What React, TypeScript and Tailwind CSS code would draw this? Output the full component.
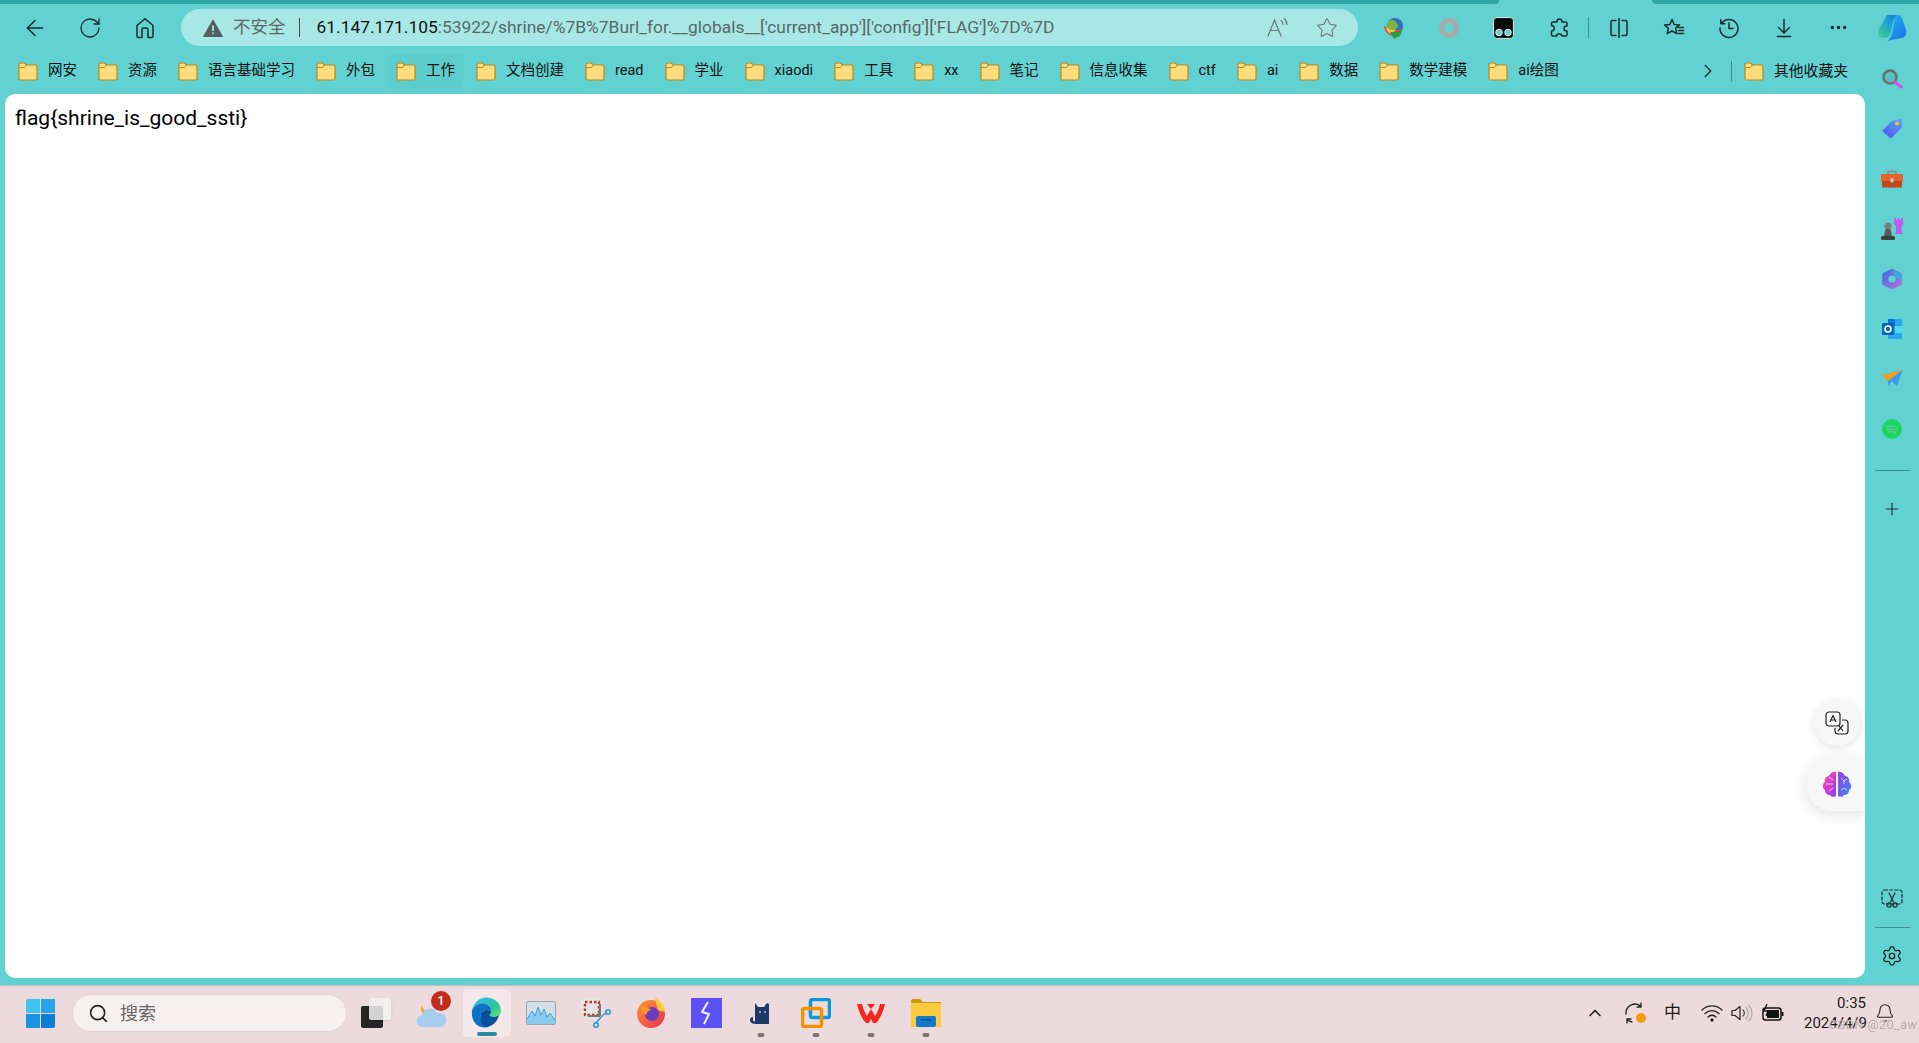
import { ArrowLeft, RotateCw, Star, ChevronRight, ChevronUp, Plus, Settings, Bell, Search, MoreHorizontal } from "lucide-react"
import type { ReactNode } from "react"

const ui = "font-['Roboto','Noto_Sans_CJK_SC',sans-serif]"

const bookmarks = ["网安", "资源", "语言基础学习", "外包", "工作", "文档创建", "read", "学业", "xiaodi", "工具", "xx", "笔记", "信息收集", "ctf", "ai", "数据", "数学建模", "ai绘图"]

const Folder = () => (
    <svg width="20" height="19" viewBox="0 0 20 19" className="shrink-0">
        <path d="M1 4V2.500A1.500 1.500 0 0 1 2.500 1h3.200c.6 0 1 .2 1.400.6L8.400 3H17.500A1.500 1.500 0 0 1 19 4.500v12A1.500 1.500 0 0 1 17.500 18h-15A1.500 1.500 0 0 1 1 16.500z" fill="#fedd80" stroke="#b98b17" strokeWidth="1.200" />
        <path d="M1 5.500h5.500L8.400 3" fill="none" stroke="#b98b17" strokeWidth="1" />
    </svg>
)

const ToolBtn = ({ children, w = "w-[55px]" }: { children: ReactNode; w?: string }) => (
    <div className={`${w} h-[36px] flex items-center justify-center shrink-0`}>{children}</div>
)

const SideBtn = ({ children }: { children: ReactNode }) => (
    <div className="h-[50px] flex items-center justify-center">{children}</div>
)

const Tile = ({ w, children, dot }: { w: string; children: ReactNode; dot?: boolean }) => (
    <div className={`${w} relative h-[48px] flex items-center justify-center shrink-0`}>
        {children}
        {dot && <div className="absolute bottom-0 left-1/2 -translate-x-1/2 w-[7px] h-[4px] rounded-full bg-[#7b7578]" />}
    </div>
)

const stroke = { fill: "none", stroke: "#1c2b2c", strokeWidth: 1.500, strokeLinecap: "round" as const, strokeLinejoin: "round" as const }

export default function App() {
    return (
        <div className={`${ui} w-[1919px] h-[1043px] overflow-hidden flex flex-col bg-[#62d1d2] text-[#111]`}>
            {/* tab strip */}
            <div className="h-[4px] flex shrink-0">
                <div className="w-[1499px] bg-[#2fa5a8] rounded-br-[6px]" />
                <div className="w-[153px]" />
                <div className="flex-1 bg-[#2fa5a8] rounded-bl-[6px]" />
            </div>

            {/* toolbar */}
            <div className="h-[46px] flex items-center pl-[7px] shrink-0 pt-[1px]">
                <ToolBtn><ArrowLeft size={26} strokeWidth={1.400} color="#1c2b2c" /></ToolBtn>
                <ToolBtn><RotateCw size={24} strokeWidth={1.300} color="#1c2b2c" /></ToolBtn>
                <ToolBtn>
                    <svg width="22" height="24" viewBox="0 0 22 24" {...stroke}>
                        <path d="M3 9.500 11 2.800l8 6.700V20a1.500 1.500 0 0 1-1.500 1.500H14v-8a1.500 1.500 0 0 0-1.500-1.500h-3A1.500 1.500 0 0 0 8 13.500v8H4.500A1.500 1.500 0 0 1 3 20z" />
                    </svg>
                </ToolBtn>
                <div className="ml-[9px] w-[1177px] h-[37px] rounded-full bg-[#a7e8e6] flex items-center shrink-0 text-[17.400px] whitespace-nowrap">
                    <svg width="20" height="18" viewBox="0 0 20 18" className="ml-[22px] shrink-0">
                        <path d="M10 1 19.500 17.500H.5z" fill="#555f61" stroke="#555f61" strokeLinejoin="round" />
                        <path d="M10 6.500v5.500M10 13.600v1.500" stroke="#a7e8e6" strokeWidth="1.800" />
                    </svg>
                    <span className="ml-[10px] text-[#5a6768] text-[17.500px]">不安全</span>
                    <div className="ml-[13px] w-[1px] h-[19px] bg-[#3d4a4b]" />
                    <span className="ml-[17px] text-[#111]">61.147.171.105</span>
                    <span className="text-[#5a6768]">:53922/shrine/%7B%7Burl_for.__globals__['current_app']['config']['FLAG']%7D%7D</span>
                    <div className="flex-1" />
                    <svg width="24" height="22" viewBox="0 0 24 22" fill="none" stroke="#6b7778" strokeWidth="1.200" strokeLinecap="round" className="shrink-0">
                        <path d="M2 19 8.500 3 15 19M4.500 13.500h8" />
                        <path d="M15 3.500c1.500 1 2 2.300 2 3.800M18 1.500c2 1.500 3 3.500 3 6" />
                    </svg>
                    <Star size={22} strokeWidth={1.200} color="#6b7778" className="ml-[26px] mr-[20px] shrink-0" />
                </div>

                <div className="ml-[8px] flex items-center">
                    <ToolBtn>
                        <svg width="22" height="22" viewBox="0 0 22 22">
                            <circle cx="12" cy="9" r="8" fill="#2f6fc0" />
                            <path d="M5 5c3-3 6-2 8 0s3 5 0 7-7 2-9-1z" fill="#7cb342" />
                            <path d="M1 9c1 6 4 9 9 10l10-7-5 1c-4 1-8-1-14-4z" fill="#d9453c" />
                            <path d="M3 10c3 2 6 3 10 3l-5 4c-3-1-5-4-5-7z" fill="#e9c53d" />
                            <path d="M7 15h8l5-4-3 8-6 3z" fill="#2e9e43" />
                        </svg>
                    </ToolBtn>
                    <ToolBtn>
                        <svg width="22" height="22" viewBox="0 0 22 22"><circle cx="11" cy="11" r="7.500" fill="none" stroke="#a8a8a8" strokeWidth="5" /></svg>
                    </ToolBtn>
                    <ToolBtn>
                        <svg width="21" height="22" viewBox="0 0 21 22">
                            <rect x=".6" y=".6" width="19.800" height="20.800" rx="3" fill="#0b0b0b" stroke="#e6e6e6" strokeWidth="1" />
                            <circle cx="6" cy="15.500" r="3.300" fill="#62d1d2" stroke="#eee" />
                            <circle cx="15" cy="15.500" r="3.300" fill="#62d1d2" stroke="#eee" />
                        </svg>
                    </ToolBtn>
                    <ToolBtn>
                        <svg width="22" height="22" viewBox="0 0 22 22" {...stroke}>
                            <path d="M9 4.500a2.500 2.500 0 0 1 5 0V5h3.500A1.500 1.500 0 0 1 19 6.500V9h-.5a2.500 2.500 0 0 0 0 5h.5v3.500a1.500 1.500 0 0 1-1.500 1.500H14a2.800 2.800 0 0 0-5.500 0H5a1.500 1.500 0 0 1-1.500-1.500V14H4a2.800 2.800 0 0 0 0-5.500h-.5V6.500A1.500 1.500 0 0 1 5 5h4z" />
                        </svg>
                    </ToolBtn>
                    <div className="w-[1px] h-[21px] mx-[2px] bg-[#3f8f90] shrink-0" />
                    <ToolBtn>
                        <svg width="22" height="22" viewBox="0 0 22 22" {...stroke}>
                            <path d="M8 3.500H4.500A1.500 1.500 0 0 0 3 5v12a1.500 1.500 0 0 0 1.500 1.500H8M14 3.500h3.500A1.500 1.500 0 0 1 19 5v12a1.500 1.500 0 0 1-1.500 1.500H14M11 1.500v19" />
                        </svg>
                    </ToolBtn>
                    <ToolBtn>
                        <svg width="22" height="22" viewBox="0 0 22 22" {...stroke}>
                            <path d="M9 2.500 11.200 7.500l5.300.4-3.900 3.500 1.200 5.200L9 14l-4.800 2.600 1.200-5.200L1.500 7.900l5.300-.4z" />
                            <path d="M15.500 10.500h5M15.500 13.500h5M15.500 16.500h5" />
                        </svg>
                    </ToolBtn>
                    <ToolBtn>
                        <svg width="22" height="22" viewBox="0 0 22 22" {...stroke}>
                            <path d="M3.500 6.500A9 9 0 1 1 2 11M2.800 2.800v4h4M11 6v5.500h4" />
                        </svg>
                    </ToolBtn>
                    <ToolBtn>
                        <svg width="22" height="22" viewBox="0 0 22 22" {...stroke}>
                            <path d="M11 2.500v13M5.500 10.500l5.500 5.500 5.500-5.500M4.500 19.500h13" />
                        </svg>
                    </ToolBtn>
                    <ToolBtn><MoreHorizontal size={21} strokeWidth={2} color="#1c2b2c" /></ToolBtn>
                    <ToolBtn w="w-[51px]">
                        <svg width="30" height="28" viewBox="0 0 30 28">
                            <defs>
                                <linearGradient id="cp1" x1="0" y1="1" x2="1" y2="0"><stop offset="0" stopColor="#43d08a" /><stop offset=".6" stopColor="#1f9fd8" /><stop offset="1" stopColor="#1579d6" /></linearGradient>
                                <linearGradient id="cp2" x1="0" y1="0" x2="1" y2="1"><stop offset="0" stopColor="#25b7f2" /><stop offset="1" stopColor="#1b6fe0" /></linearGradient>
                            </defs>
                            <path d="M10 1h11c-4 2-5 6-6 11-1 6-2 11-6 12H7C2 24 0 20 2 15z" fill="url(#cp1)" />
                            <path d="M21 1c3 0 4 3 5 6l3 9c1 4-1 8-5 8l-14 3c4-2 5-7 6-13 1-6 1-12 5-13z" fill="url(#cp2)" />
                        </svg>
                    </ToolBtn>
                </div>
            </div>

            <div className="flex-1 flex min-h-0">
                <div className="w-[1865px] flex flex-col shrink-0">
                    {/* favorites */}
                    <div className="h-[44px] flex items-center pl-[10px] pb-[2px] shrink-0 whitespace-nowrap">
                        {bookmarks.map(name => (
                            <div key={name} className={`h-[34px] px-[8px] mr-[5px] flex items-center gap-[10px] rounded-[4px] text-[14.500px] ${name === "工作" ? "bg-[#5dcccd]" : ""}`}>
                                <Folder />
                                <span>{name}</span>
                            </div>
                        ))}
                        <div className="flex-1" />
                        <ChevronRight size={22} strokeWidth={1.500} color="#1c2b2c" />
                        <div className="w-[1px] h-[21px] ml-[12px] mr-[12px] bg-[#3f8f90]" />
                        <div className="h-[34px] pr-[17px] flex items-center gap-[10px] text-[14.800px]">
                            <Folder />
                            <span>其他收藏夹</span>
                        </div>
                    </div>

                    {/* page */}
                    <div className="relative flex-1 ml-[5px] bg-white rounded-[10px] pl-[10px] pt-[9px] text-[21px] leading-[30px] text-black overflow-hidden">
                        flag{"{"}shrine_is_good_ssti{"}"}
                        <div className="absolute left-[1809px] top-[606px] w-[46px] h-[46px] rounded-full bg-[#f7f7f7] shadow-[0_2px_10px_rgba(0,0,0,0.12)] flex items-center justify-center">
                            <svg width="24" height="24" viewBox="0 0 24 24" fill="none" stroke="#222" strokeWidth="1.200" strokeLinejoin="round">
                                <rect x="1" y="1" width="14" height="14" rx="3" />
                                <path d="M5 11 8 4.500 11 11M6 9h4" />
                                <path d="M17 9h3a3 3 0 0 1 3 3v8a3 3 0 0 1-3 3h-7a3 3 0 0 1-3-3v-3" />
                                <path d="M13 20l5-6M14 15l4 5" />
                            </svg>
                        </div>
                        <div className="absolute right-0 top-[664px] w-[60px] h-[55px] rounded-l-[28px] bg-[#f7f7f7] shadow-[0_4px_14px_rgba(0,0,0,0.12)] flex items-center pl-[17px] -mt-[2px]">
                            <svg width="30" height="28" viewBox="0 0 30 28">
                                <defs>
                                    <linearGradient id="br1" x1="0" y1="0" x2="1" y2="1"><stop offset="0" stopColor="#f59a3c" /><stop offset=".35" stopColor="#e63fc2" /><stop offset="1" stopColor="#8a3ff0" /></linearGradient>
                                    <linearGradient id="br2" x1="0" y1="0" x2="1" y2="1"><stop offset="0" stopColor="#a03fe8" /><stop offset="1" stopColor="#2f8cf5" /></linearGradient>
                                </defs>
                                <path d="M14 2v24c-2 1.500-5 1-6-1-3 0-5-2-5-5-3-2-3-6 0-8-1-3 1-6 4-6 1-3 5-5 7-4z" fill="url(#br1)" />
                                <path d="M16 2v24c2 1.500 5 1 6-1 3 0 5-2 5-5 3-2 3-6 0-8 1-3-1-6-4-6-1-3-5-5-7-4z" fill="url(#br2)" />
                                <path d="M4 14h7M7 7l4 3M7 21l4-3M19 8l3 3 3-2M22 11v3M19 20l3-2 3 2" fill="none" stroke="#fff" strokeOpacity=".7" strokeWidth="1" />
                            </svg>
                        </div>
                    </div>
                </div>

                {/* sidebar */}
                <div className="flex-1 flex flex-col pt-[4px] pb-[7px]">
                    <SideBtn>
                        <svg width="22" height="22" viewBox="0 0 22 22">
                            <circle cx="9" cy="9" r="6.500" fill="#58bfc4" stroke="#6d6d6d" strokeWidth="2.400" />
                            <path d="M14 14l6 5" stroke="#d24fe0" strokeWidth="3" strokeLinecap="round" />
                        </svg>
                    </SideBtn>
                    <SideBtn>
                        <svg width="22" height="22" viewBox="0 0 22 22">
                            <defs><linearGradient id="tg" x1="0" y1="1" x2="1" y2="0"><stop offset="0" stopColor="#4f4ff0" /><stop offset="1" stopColor="#5aa5f5" /></linearGradient></defs>
                            <path d="M1.500 13 11 3.500 20.500 1v8.500L10 20z" fill="url(#tg)" stroke="url(#tg)" strokeLinejoin="round" />
                            <circle cx="16" cy="5.500" r="2" fill="#f4c430" />
                        </svg>
                    </SideBtn>
                    <SideBtn>
                        <svg width="24" height="20" viewBox="0 0 24 20">
                            <path d="M8 5V2.500h8V5" fill="none" stroke="#8a8a8a" strokeWidth="1.600" />
                            <rect x="1" y="5" width="22" height="8" rx="1" fill="#e8642c" />
                            <rect x="2" y="12" width="20" height="6.500" rx="1" fill="#bd4716" />
                            <rect x="10.500" y="9.500" width="3" height="4" fill="#c9c9c9" />
                        </svg>
                    </SideBtn>
                    <SideBtn>
                        <svg width="24" height="24" viewBox="0 0 24 24">
                            <path d="M14 1h2v2h1.500V1h2v2H21V1h2v6l-1.500 2v6l1.500 2h-8l1-2V9l-2-2z" fill="#c45af0" />
                            <circle cx="8" cy="9" r="3.500" fill="#7b7b7b" />
                            <path d="M5.500 12h5l1.500 7H4z" fill="#5a5a5a" />
                            <rect x="1" y="19" width="14" height="4" rx="1.500" fill="#3f3f3f" />
                        </svg>
                    </SideBtn>
                    <SideBtn>
                        <svg width="22" height="22" viewBox="0 0 22 22">
                            <defs><linearGradient id="ms" x1="0" y1="0" x2="1" y2="1"><stop offset="0" stopColor="#3c6fe0" /><stop offset="1" stopColor="#b46fdc" /></linearGradient></defs>
                            <path d="M11 1.500 20 6v10l-9 4.500L2 16V6z" fill="url(#ms)" stroke="url(#ms)" strokeWidth="1.500" strokeLinejoin="round" />
                            <path d="M11 1.500 20 6v6l-5-2.500z" fill="#2fb2d8" />
                            <circle cx="11" cy="11" r="3.600" fill="#62d1d2" />
                        </svg>
                    </SideBtn>
                    <SideBtn>
                        <svg width="22" height="22" viewBox="0 0 22 22">
                            <rect x="7" y="1" width="14" height="20" rx="1" fill="#28a8ea" />
                            <rect x="7" y="1" width="7" height="7" fill="#0078d4" />
                            <rect x="14" y="8" width="7" height="7" fill="#50d9ff" />
                            <rect x="1" y="5" width="12" height="12" rx="1.500" fill="#0a64b8" />
                            <circle cx="7" cy="11" r="3" fill="none" stroke="#fff" strokeWidth="1.700" />
                        </svg>
                    </SideBtn>
                    <SideBtn>
                        <svg width="22" height="18" viewBox="0 0 22 18">
                            <path d="M.5 5 21.500 0 16 16 10.500 11 8 16 6 9z" fill="#3b9af0" />
                            <path d="M.5 5 21.500 0 7 11z" fill="#f0a024" />
                        </svg>
                    </SideBtn>
                    <SideBtn>
                        <svg width="20" height="20" viewBox="0 0 20 20">
                            <circle cx="10" cy="10" r="10" fill="#1fd35f" />
                            <path d="M4.500 7.500c4-1 8-1 11 .8M5 10.300c3.500-.8 7-.6 9.800.8M5.800 13c3-.6 5.500-.4 7.800.7" fill="none" stroke="#5fcf9a" strokeWidth="1.300" strokeLinecap="round" />
                        </svg>
                    </SideBtn>
                    <div className="h-[1px] w-[35px] mx-auto mt-[16px] bg-[#3f8f90]" />
                    <div className="h-[38px] mt-[19px] flex items-center justify-center">
                        <Plus size={20} strokeWidth={1.300} color="#1c2b2c" />
                    </div>
                    <div className="flex-1" />
                    <div className="h-[30px] flex items-center justify-center">
                        <svg width="22" height="20" viewBox="0 0 22 20" {...stroke} strokeWidth={1.200}>
                            <rect x="1" y="1" width="20" height="14" rx="2.500" strokeDasharray="3 2.200" />
                            <path d="M8 4l4.500 9M14 4l-4.500 9" />
                            <circle cx="8" cy="16" r="2.200" />
                            <circle cx="14" cy="16" r="2.200" />
                        </svg>
                    </div>
                    <div className="h-[1px] w-[35px] mx-auto mt-[13px] mb-[13px] bg-[#3f8f90]" />
                    <div className="h-[30px] flex items-center justify-center">
                        <Settings size={22} strokeWidth={1.300} color="#111" />
                    </div>
                </div>
            </div>

            <div className="h-[7px] shrink-0" />

            {/* taskbar */}
            <div className="h-[58px] shrink-0 bg-[#eddadd] border-t border-[#c8bcbe] pb-[3px] flex items-center text-[#1a1a1a]">
                <div className="ml-[26px] w-[29px] h-[29px] grid grid-cols-2 grid-rows-2 gap-[1px] shrink-0">
                    <div className="bg-[#3fc3f5] rounded-tl-[2px]" />
                    <div className="bg-[#27a4ea]" />
                    <div className="bg-[#1b93e4]" />
                    <div className="bg-[#0f7dd6] rounded-br-[2px]" />
                </div>
                <div className="ml-[17px] w-[275px] h-[38px] rounded-full bg-[#f6f0f1] border border-[#e0d3d6] flex items-center pl-[15px] shrink-0">
                    <Search size={21} strokeWidth={1.800} color="#222" />
                    <span className="ml-[11px] text-[18px] text-[#666]">搜索</span>
                </div>

                <div className="ml-[14px] w-[30px] h-[30px] relative shrink-0">
                    <div className="absolute left-0 bottom-0 w-[22px] h-[22px] rounded-[2px] bg-[#262626]" />
                    <div className="absolute right-0 top-0 w-[22px] h-[22px] rounded-[2px] bg-[#f3f1f1]/85 shadow-sm" />
                </div>

                <div className="ml-[26px] w-[30px] h-[30px] relative shrink-0">
                    <svg width="30" height="28" viewBox="0 0 30 28" className="absolute bottom-0 left-0">
                        <path d="M5 5c1 5 4 7 9 6-1 2-4 4-7 3-3-1-4-5-2-9z" fill="#f0a93a" />
                        <path d="M6 27a6 6 0 0 1-1-12 8 8 0 0 1 15-2 7 7 0 0 1 4 14z" fill="#a7cdef" />
                    </svg>
                    <div className="absolute -right-[4px] -top-[7px] w-[20px] h-[20px] rounded-full bg-[#c42b1c] text-white text-[13px] leading-[20px] text-center font-medium">1</div>
                </div>

                <div className="ml-[16px] relative w-[44px] h-[48px] shrink-0">
                    <div className="absolute -right-[4px] top-[1px] bottom-[1px] w-[8px] rounded-r-[4px] bg-[#f3e7e9]" />
                    <div className="absolute inset-0 rounded-[4px] bg-[#f4e8ea] flex items-start justify-center pt-[8px] pl-[2px]">
                        <svg width="31" height="32" viewBox="0 0 32 32">
                            <defs>
                                <linearGradient id="ed1" x1="0" y1="0" x2="1" y2="1"><stop offset="0" stopColor="#35c1f1" /><stop offset=".6" stopColor="#2bc3a0" /><stop offset="1" stopColor="#66eb6e" /></linearGradient>
                            </defs>
                            <path d="M1 14C2 6 8 0 16 0c8 0 15 6 15 14 0 4-3 6-7 6-3 0-5-1-5-2 1-1 2-2 2-4 0-4-4-8-9-8C7 6 3 9 1 14z" fill="url(#ed1)" />
                            <path d="M1 14c2-5 6-8 11-8 5 0 9 4 9 8-6-3-11 0-11 5 0 5 4 9 9 11-1 .500-3 1-5 1C6 31 0 24 1 14z" fill="#0c72c4" />
                            <path d="M10 19c0-5 5-8 11-5 0 2-1 3-2 4 0 1 2 2 5 2 2 0 4-1 5-2-2 8-8 13-15 12-3-2-4-7-4-11z" fill="#0a4f9a" />
                        </svg>
                    </div>
                    <div className="absolute bottom-[1px] left-[14px] w-[20px] h-[4px] rounded-full bg-[#2d8a9a]" />
                </div>

                <div className="ml-[19px] w-[30px] h-[24px] rounded-[2px] bg-[#d5dfe6] border border-[#9aa7ad] overflow-hidden shrink-0">
                    <svg width="28" height="22" viewBox="0 0 28 22">
                        <path d="M0 17 5 9l3 5 3-9 3 8 3-6 3 8 3-4 5 7v4H0z" fill="#8ccbf0" />
                        <path d="M0 17 5 9l3 5 3-9 3 8 3-6 3 8 3-4 5 7" fill="none" stroke="#3f9fe0" strokeWidth="1" />
                    </svg>
                </div>

                <div className="ml-[25px] flex items-center">
                    <Tile w="w-[30px]">
                        <svg width="30" height="30" viewBox="0 0 30 30">
                            <rect x="0" y="0" width="22" height="21" rx="2" fill="#e3e5e7" />
                            <rect x="4" y="4" width="14" height="13" fill="none" stroke="#c4361e" strokeWidth="2.400" strokeDasharray="2.500 2" />
                            <path d="M19 6v12M19 18H7" stroke="#777" strokeWidth="2" />
                            <path d="M15 25l6-7 5-4" fill="none" stroke="#2a9ad8" strokeWidth="1.600" />
                            <circle cx="27" cy="14" r="2.300" fill="none" stroke="#2a9ad8" strokeWidth="1.600" />
                            <circle cx="15" cy="27" r="2.300" fill="none" stroke="#2a9ad8" strokeWidth="1.600" />
                        </svg>
                    </Tile>
                </div>

                <div className="ml-[25px] shrink-0">
                    <svg width="30" height="30" viewBox="0 0 30 30">
                        <defs><linearGradient id="ff" x1="0" y1="0" x2="1" y2="1"><stop offset="0" stopColor="#ff9a2e" /><stop offset="1" stopColor="#e8304f" /></linearGradient></defs>
                        <circle cx="15" cy="16" r="14" fill="url(#ff)" />
                        <path d="M19 0c6 3 10 8 10 14l-7-2c-1-5-3-8-3-12z" fill="#ffc93c" />
                        <circle cx="16" cy="16" r="7" fill="#6a3bc0" />
                        <path d="M5 9c4 0 8 1 11 3-3 0-6 2-5 5-3-1-6-4-6-8z" fill="#ff9a2e" />
                    </svg>
                </div>

                <div className="ml-[25px] w-[31px] h-[30px] bg-[#5b51f5] flex items-center justify-center shrink-0">
                    <svg width="14" height="24" viewBox="0 0 14 24"><path d="M8 1 2 11l7 2-5 10" fill="none" stroke="#f2f2ff" strokeWidth="2" strokeLinejoin="round" /></svg>
                </div>

                <div className="ml-[22px] w-[34px] shrink-0">
                    <Tile w="w-[34px]" dot>
                        <svg width="24" height="22" viewBox="0 0 24 22">
                            <path d="M6 1l3 4h6l3-4 2 1v20H8C4 22 1 21 1 18c0-2 1-3 3-3v3c0 1 1 1.500 2 1.500z" fill="#1c3a66" />
                            <circle cx="11" cy="10" r="1" fill="#9fc3ea" />
                            <circle cx="16" cy="10" r="1" fill="#9fc3ea" />
                        </svg>
                    </Tile>
                </div>

                <div className="ml-[21px] w-[34px] shrink-0">
                    <Tile w="w-[34px]" dot>
                        <svg width="30" height="30" viewBox="0 0 30 30">
                            <rect x="9.500" y="1.500" width="19" height="18" rx="2" fill="none" stroke="#0f98d8" strokeWidth="3.500" />
                            <rect x="1.500" y="10.500" width="19" height="18" rx="2" fill="none" stroke="#f39200" strokeWidth="3.500" />
                        </svg>
                    </Tile>
                </div>

                <div className="ml-[21px] w-[34px] shrink-0">
                    <Tile w="w-[34px]" dot>
                        <svg width="30" height="22" viewBox="0 0 30 22">
                            <path d="M1 2 6 2c1 5 3 9 5 12l4-7 4 7c2-3 4-7 5-12l5 0C27 10 24 17 20 21h-3l-2-4-2 4h-3C6 17 3 10 1 2z" fill="#f3281e" />
                            <path d="M11 2h8l-4 5z" fill="#f3281e" />
                        </svg>
                    </Tile>
                </div>

                <div className="ml-[21px] w-[34px] shrink-0">
                    <Tile w="w-[34px]" dot>
                        <svg width="30" height="28" viewBox="0 0 30 28">
                            <path d="M0 2a2 2 0 0 1 2-2h7l3 3h18v3H0z" fill="#c99a12" />
                            <rect x="0" y="4" width="30" height="24" fill="#fbcb40" />
                            <rect x="5" y="17" width="20" height="11" rx="2" fill="#1479c8" />
                            <rect x="10" y="20" width="10" height="1.500" fill="#0c4f8c" />
                        </svg>
                    </Tile>
                </div>

                <div className="flex-1" />

                {/* tray */}
                <ChevronUp size={20} strokeWidth={2} color="#222" className="shrink-0" />
                <div className="ml-[19px] relative w-[22px] h-[22px] shrink-0">
                    <svg width="22" height="22" viewBox="0 0 22 22" fill="none" stroke="#222" strokeWidth="1.300" strokeLinecap="round">
                        <path d="M2 12A9 9 0 0 1 17 4.500M17 1v4h-4M8 20a9 9 0 0 1-5-2.500M3 21v-4h4" />
                    </svg>
                    <div className="absolute right-0 bottom-[1px] w-[10px] h-[10px] rounded-full bg-[#f39c12]" />
                </div>
                <span className="ml-[18px] text-[17px] shrink-0">中</span>
                <svg width="22" height="18" viewBox="0 0 22 18" fill="none" stroke="#222" strokeWidth="1.300" strokeLinecap="round" className="ml-[20px] shrink-0">
                    <path d="M1 6a14 14 0 0 1 20 0M4 9.500a10 10 0 0 1 14 0M7 13a5.500 5.500 0 0 1 8 0" />
                    <circle cx="11" cy="16" r="1" fill="#222" />
                </svg>
                <svg width="22" height="18" viewBox="0 0 22 18" fill="none" strokeWidth="1.200" strokeLinecap="round" className="ml-[8px] shrink-0">
                    <path d="M1 6.500h3L9 2.500v13L4 11.500H1z" stroke="#222" strokeLinejoin="round" />
                    <path d="M12 6a4 4 0 0 1 0 6" stroke="#444" />
                    <path d="M15 3.500a8 8 0 0 1 0 11M18 1.500a11 11 0 0 1 0 15" stroke="#aaa" />
                </svg>
                <svg width="22" height="18" viewBox="0 0 22 18" className="ml-[9px] shrink-0">
                    <rect x="1" y="4" width="18" height="12" rx="2.500" fill="none" stroke="#111" strokeWidth="1.500" />
                    <rect x="5" y="6" width="12" height="8" fill="#111" />
                    <rect x="19.500" y="8" width="2" height="4" fill="#111" />
                    <path d="M5 0 2 7h4l-2 5" fill="none" stroke="#111" strokeWidth="1.300" />
                </svg>
                <div className="ml-[20px] w-[62px] text-right text-[15px] leading-[20px] shrink-0 relative">
                    <div>0:35</div>
                    <div className="whitespace-nowrap">2024/4/9</div>
                    <div className="absolute left-[25px] top-[25px] text-[12.500px] leading-[14px] tracking-[0.5px] text-[#b5adaf] whitespace-nowrap">CSDN @20_aw</div>
                </div>
                <Bell size={20} strokeWidth={1.300} color="#222" className="ml-[9px] mr-[24px] shrink-0" />
            </div>
        </div>
    )
}
